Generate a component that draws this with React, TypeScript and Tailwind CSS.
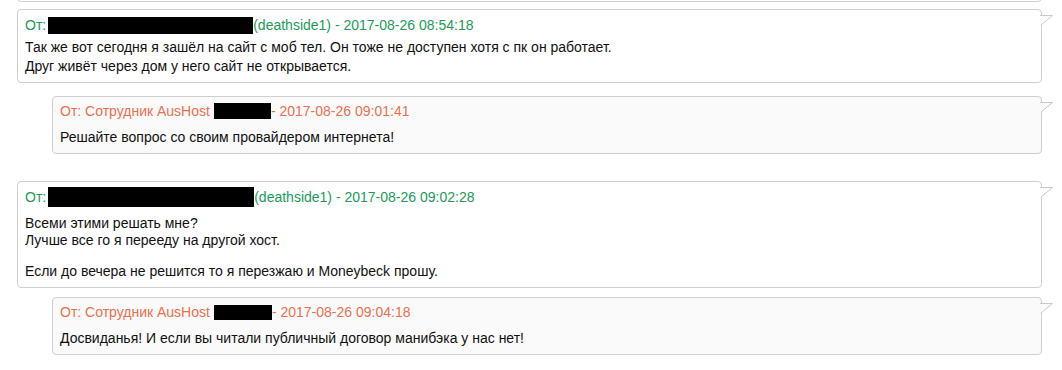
import React from "react";

const Tail = ({ bg }: { bg: string }) => (
  <svg
    className="absolute right-[-13px] top-[5px]"
    width="14"
    height="12"
    viewBox="0 0 14 12"
  >
    <polygon points="0,0.5 12.5,0.5 0,10.5" fill={bg} />
    <path d="M0 0.5 L12.5 0.5 L0.8 10.2" fill="none" stroke="#c9c9c9" strokeWidth="1" />
  </svg>
);

const Redact = ({ w, h, ml }: { w: number; h: number; ml: number }) => (
  <span className="inline-block bg-black shrink-0" style={{ width: w, height: h, marginLeft: ml }} />
);

export default function App() {
  return (
    <div
      className="w-[1062px] h-[370px] bg-white overflow-hidden text-[14px] text-[#111]"
      style={{ fontFamily: '"Liberation Sans", Arial, Helvetica, sans-serif' }}
    >
      <div className="flex flex-col pl-[17px] pr-[20px]">
        {/* previous message bottom */}
        <div className="relative -mt-[38px] h-[40px] border border-[#cfcfcf] rounded-[4px] bg-white" />

        {/* Box 1 */}
        <div className="relative mt-[7px] h-[74px] border border-[#cfcfcf] rounded-[4px] bg-white pl-[7px] pt-[5px]">
          <Tail bg="#ffffff" />
          <div className="flex items-center h-[20px] text-[#229a5a] whitespace-pre">
            <span>От:</span>
            <Redact w={205} h={17} ml={2} />
            <span>(deathside1) - 2017-08-26 08:54:18</span>
          </div>
          <div className="mt-[3px] leading-[19px]">
            Так же вот сегодня я зашёл на сайт с моб тел. Он тоже не доступен хотя с пк он работает.
            <br />
            Друг живёт через дом у него сайт не открывается.
          </div>
        </div>

        {/* Box 2 */}
        <div className="relative ml-[35px] mt-[13px] h-[58px] border border-[#cfcfcf] rounded-[4px] bg-[#fafafa] pl-[7px] pt-[4px]">
          <Tail bg="#fafafa" />
          <div className="flex items-center h-[20px] text-[#e8704f] whitespace-pre">
            <span>От: Сотрудник AusHost</span>
            <Redact w={57} h={16} ml={4} />
            <span>- 2017-08-26 09:01:41</span>
          </div>
          <div className="mt-[7px] leading-[18px]">Решайте вопрос со своим провайдером интернета!</div>
        </div>

        {/* Box 3 */}
        <div className="relative mt-[27px] h-[107px] border border-[#cfcfcf] rounded-[4px] bg-white pl-[7px] pt-[5px]">
          <Tail bg="#ffffff" />
          <div className="flex items-center h-[20px] text-[#229a5a] whitespace-pre">
            <span>От:</span>
            <Redact w={206} h={20} ml={2} />
            <span>(deathside1) - 2017-08-26 09:02:28</span>
          </div>
          <div className="mt-[8px] leading-[17px]">
            Всеми этими решать мне?
            <br />
            Лучше все го я перееду на другой хост.
          </div>
          <div className="mt-[13px] leading-[18px]">
            Если до вечера не решится то я перезжаю и Moneybeck прошу.
          </div>
        </div>

        {/* Box 4 */}
        <div className="relative ml-[35px] mt-[9px] h-[58px] border border-[#cfcfcf] rounded-[4px] bg-[#fafafa] pl-[7px] pt-[4px]">
          <Tail bg="#fafafa" />
          <div className="flex items-center h-[20px] text-[#e8704f] whitespace-pre">
            <span>От: Сотрудник AusHost</span>
            <Redact w={58} h={15} ml={4} />
            <span>- 2017-08-26 09:04:18</span>
          </div>
          <div className="mt-[7px] leading-[18px]">
            Досвиданья! И если вы читали публичный договор манибэка у нас нет!
          </div>
        </div>
      </div>
    </div>
  );
}
